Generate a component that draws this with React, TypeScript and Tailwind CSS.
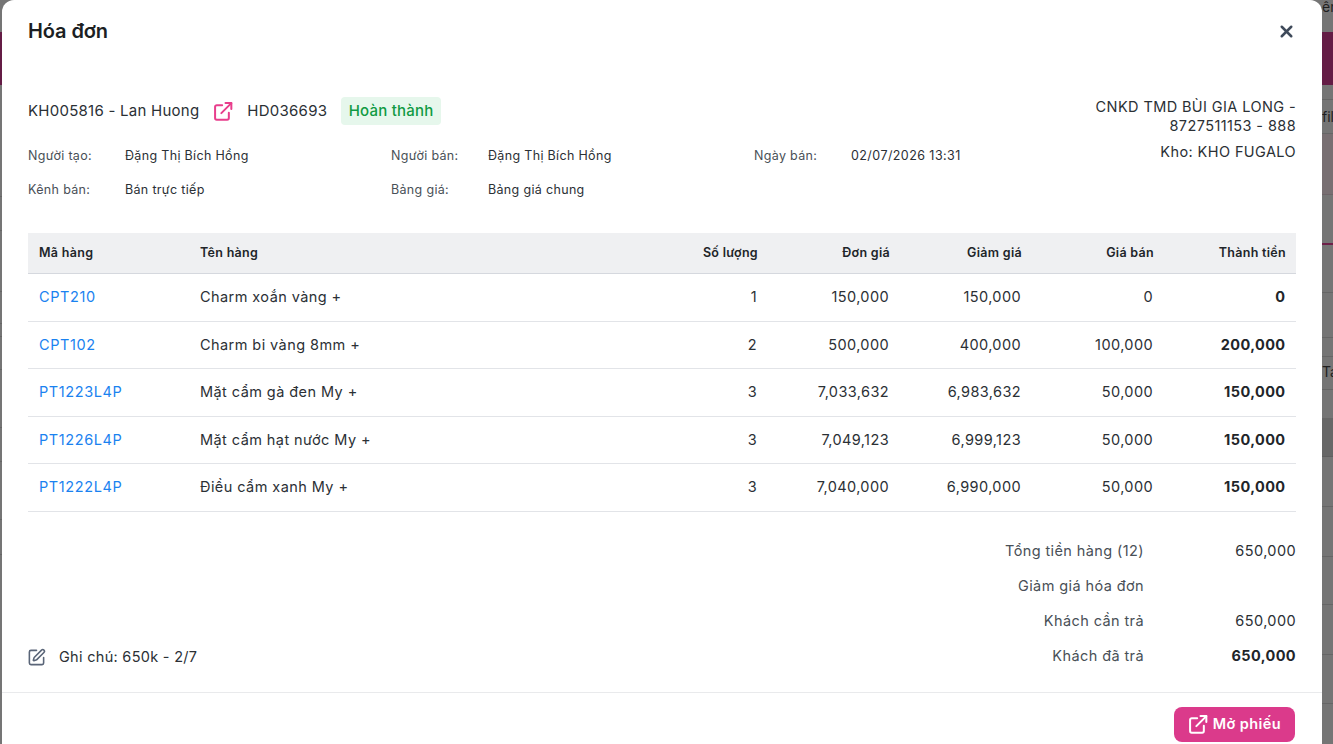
import { SquarePen, X } from 'lucide-react';

const rows = [
    { code: 'CPT210', name: 'Charm xoắn vàng +', qty: 1, price: '150,000', discount: '150,000', sale: '0', total: '0' },
    { code: 'CPT102', name: 'Charm bi vàng 8mm +', qty: 2, price: '500,000', discount: '400,000', sale: '100,000', total: '200,000' },
    { code: 'PT1223L4P', name: 'Mặt cẩm gà đen My +', qty: 3, price: '7,033,632', discount: '6,983,632', sale: '50,000', total: '150,000' },
    { code: 'PT1226L4P', name: 'Mặt cẩm hạt nước My +', qty: 3, price: '7,049,123', discount: '6,999,123', sale: '50,000', total: '150,000' },
    { code: 'PT1222L4P', name: 'Điều cẩm xanh My +', qty: 3, price: '7,040,000', discount: '6,990,000', sale: '50,000', total: '150,000' },
];

const info = [
    [
        ['Người tạo:', 'Đặng Thị Bích Hồng'],
        ['Người bán:', 'Đặng Thị Bích Hồng'],
        ['Ngày bán:', '02/07/2026 13:31'],
    ],
    [
        ['Kênh bán:', 'Bán trực tiếp'],
        ['Bảng giá:', 'Bảng giá chung'],
    ],
];

const totals = [
    ['Tổng tiền hàng (12)', '650,000'],
    ['Giảm giá hóa đơn', ''],
    ['Khách cần trả', '650,000'],
    ['Khách đã trả', '650,000'],
];

function OpenIcon({ size }: { size: number }) {
    return (
        <svg width={size} height={size} viewBox="0 0 24 24" fill="none" stroke="currentColor" strokeWidth="2.4" strokeLinecap="round" strokeLinejoin="round">
            <path d="M11 5H4.5a2 2 0 0 0-2 2v13.5a2 2 0 0 0 2 2H17a2 2 0 0 0 2-2V14" />
            <path d="M10 14.5 22 2.5" />
            <path d="M15 2.5h7v7" />
        </svg>
    );
}

export default function App() {
    return (
        <div className="flex h-[744px] w-[1333px] overflow-hidden bg-[#757575] font-['Inter',sans-serif] text-[#2b3035]">
            {/* Page behind the dialog */}
            <div className="w-[2px] shrink-0">
                <div className="mt-[32px] h-[53px] bg-[#641c45]" />
                <div className="h-[112px] border-b border-[#666]" />
                <div className="h-[34px] border-b border-[#666]" />
                <div className="h-[61px] border-b border-[#666]" />
                <div className="h-[32px] border-b border-[#666]" />
                <div className="h-[13px] border-b border-[#666]" />
                <div className="h-[33px] border-b border-[#666]" />
                <div className="h-[58px] border-b border-[#666]" />
                <div className="h-[34px] border-b border-[#666]" />
                <div className="h-[58px] border-b border-[#666]" />
                <div className="h-[35px] border-b border-[#666]" />
            </div>

            <div className="flex h-[744px] min-w-0 flex-1 flex-col rounded-t-xl bg-white">
                {/* Header */}
                <div className="flex h-[62px] items-center justify-between pl-[26px] pr-[26px]">
                    <h2 className="text-xl font-semibold tracking-[-0.1px] text-[#1c1f23]">Hóa đơn</h2>
                    <X size={19} strokeWidth={3.2} className="text-[#3f4a5a]" />
                </div>

                {/* Invoice info */}
                <div className="flex justify-between px-[26px] pt-[35px]">
                    <div>
                        <div className="flex h-[28px] items-center text-[15px] tracking-[0.25px]">
                            <span>KH005816 - Lan Huong</span>
                            <span className="ml-[14px] text-[#e83e8c]"><OpenIcon size={20} /></span>
                            <span className="ml-[14px]">HD036693</span>
                            <span className="ml-[14px] rounded-[4px] bg-[#e6f7ec] px-[7.5px] py-[3px] font-medium tracking-[0.2px] text-[#109a43]">Hoàn thành</span>
                        </div>
                        <div className="mt-[23px] flex flex-col gap-[17px] text-[12.5px] tracking-[0.33px]">
                            {info.map((line, i) => (
                                <div key={i} className="flex h-[17px] items-center">
                                    {line.map(([label, value]) => (
                                        <div key={label} className="flex w-[363px] last:w-auto">
                                            <span className="w-[97px] text-[#495057]">{label}</span>
                                            <span className={value.startsWith('0') ? 'tracking-[0.43px]' : ''}>{value}</span>
                                        </div>
                                    ))}
                                </div>
                            ))}
                        </div>
                    </div>
                    <div className="w-[230px] text-right text-[14.5px] leading-[19px] tracking-[0.4px]">
                        <p>CNKD TMD BÙI GIA LONG - 8727511153 - 888</p>
                        <p className="mt-[7px]">Kho: KHO FUGALO</p>
                    </div>
                </div>

                {/* Items */}
                <div className="mx-[26px] mt-[34px]">
                    <div className="flex h-[41px] items-center border-b border-[#d5d8de] bg-[#eff0f2] text-[12.5px] font-semibold tracking-[0.3px] text-[#212529]">
                        <div className="w-[161px] pl-[11px]">Mã hàng</div>
                        <div className="flex-1 pl-[11px]">Tên hàng</div>
                        <div className="w-[110px] pr-[10px] text-right">Số lượng</div>
                        <div className="w-[132px] pr-[10px] text-right">Đơn giá</div>
                        <div className="w-[132px] pr-[10px] text-right">Giảm giá</div>
                        <div className="w-[132px] pr-[10px] text-right">Giá bán</div>
                        <div className="w-[132px] pr-[10px] text-right">Thành tiền</div>
                    </div>
                    {rows.map((row) => (
                        <div key={row.code} className="flex h-[47.5px] items-center border-b border-[#e2e4e8] text-[14.5px] tracking-[0.4px]">
                            <div className="w-[161px] pl-[11px] tracking-[0.6px] text-[#1a82f0]">{row.code}</div>
                            <div className="flex-1 pl-[11px] tracking-[0.43px]">{row.name}</div>
                            <div className="w-[110px] pr-[11px] text-right">{row.qty}</div>
                            <div className="w-[132px] pr-[11px] text-right">{row.price}</div>
                            <div className="w-[132px] pr-[11px] text-right">{row.discount}</div>
                            <div className="w-[132px] pr-[11px] text-right">{row.sale}</div>
                            <div className="w-[132px] pr-[10.5px] text-right font-bold text-[#212529]">{row.total}</div>
                        </div>
                    ))}
                </div>

                {/* Totals and note */}
                <div className="mx-[26px] mt-[22px] flex items-end justify-between text-[14.5px] tracking-[0.4px]">
                    <div className="flex h-[33px] items-center gap-[13px]">
                        <SquarePen size={19} strokeWidth={2} className="-ml-[1px] text-[#5a6578]" />
                        <span className="tracking-[0.3px]">Ghi chú: 650k - 2/7</span>
                    </div>
                    <div className="flex flex-col">
                        {totals.map(([label, value], i) => (
                            <div key={label} className="flex h-[35px] items-center justify-end">
                                <span className="text-[#495057]">{label}</span>
                                <span className={`w-[152px] text-right ${i === 3 ? 'font-bold text-[#212529]' : ''}`}>{value}</span>
                            </div>
                        ))}
                    </div>
                </div>

                {/* Footer */}
                <div className="mt-[18px] flex justify-end border-t border-[#e9eaec] px-[27px] pt-[14px]">
                    <button className="flex h-[35px] items-center gap-[5px] rounded-[8px] bg-[#db3a8b] px-[14px] text-[14.5px] font-semibold tracking-[0.4px] text-white">
                        <OpenIcon size={20} />
                        Mở phiếu
                    </button>
                </div>
            </div>

            {/* Page behind the dialog */}
            <div className="w-[11px] shrink-0 overflow-hidden whitespace-nowrap text-sm leading-none text-[#1f1f1f]">
                <div className="h-[32px]">ền</div>
                <div className="h-[53px] bg-[#641c45]" />
                <div className="h-[15px] border-b border-[#666]" />
                <div className="h-[34px] border-b border-[#666] pt-[10px]">fil</div>
                <div className="h-[61px] border-b border-[#6e6468] bg-[#786f72]" />
                <div className="h-[50px] border-b-2 border-[#6e2049]" />
                <div className="h-[48px] border-b border-[#666]" />
                <div className="h-[45px] border-b border-[#666]" />
                <div className="h-[19px] border-b border-[#666]" />
                <div className="h-[33px] border-b border-[#666] pt-[8px]">Tá</div>
                <div className="h-[28px]" />
                <div className="h-[39px] border-b border-[#5f5f5f] bg-[#676767]" />
                <div className="h-[50px] border-b border-[#666]" />
                <div className="h-[50px] border-b border-[#666]" />
                <div className="h-[48px] border-b border-[#666]" />
                <div className="h-[50px] border-b border-[#666]" />
                <div className="h-[49px] border-b border-[#666]" />
            </div>
        </div>
    );
}
